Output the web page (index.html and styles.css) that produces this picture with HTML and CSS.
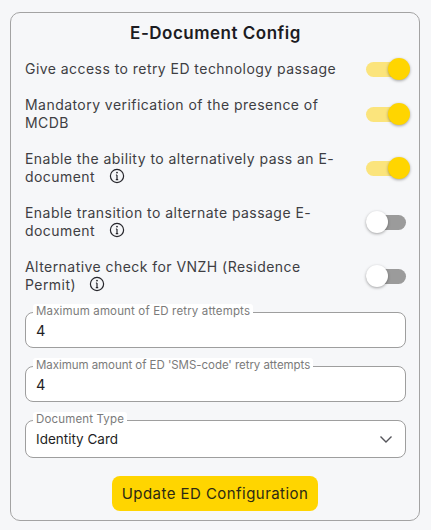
FILE: index.html
```html
<!DOCTYPE html>
<html lang="en">
<head>
<meta charset="utf-8">
<title>E-Document Config</title>
<link rel="stylesheet" href="styles.css">
</head>
<body>
<main class="card">
  <h1 class="title">E-Document Config</h1>
  <div class="rows">
    <div class="row">
      <span class="row-label">Give access to retry ED technology passage</span>
      <span class="switch on"><span class="thumb"></span></span>
    </div>
    <div class="row">
      <span class="row-label">Mandatory verification of the presence of MCDB</span>
      <span class="switch on"><span class="thumb"></span></span>
    </div>
    <div class="row">
      <span class="row-label">Enable the ability to alternatively pass an E-document
        <svg class="info" viewBox="0 0 16 16"><circle cx="8" cy="8" r="6.6"/><path d="M8 7v4.6M6.8 11.6h2.4M6.9 7H8"/><circle class="dot" cx="8" cy="4.6" r=".9"/></svg></span>
      <span class="switch on"><span class="thumb"></span></span>
    </div>
    <div class="row">
      <span class="row-label">Enable transition to alternate passage E-document
        <svg class="info" viewBox="0 0 16 16"><circle cx="8" cy="8" r="6.6"/><path d="M8 7v4.6M6.8 11.6h2.4M6.9 7H8"/><circle class="dot" cx="8" cy="4.6" r=".9"/></svg></span>
      <span class="switch"><span class="thumb"></span></span>
    </div>
    <div class="row">
      <span class="row-label">Alternative check for VNZH (Residence Permit)
        <svg class="info" viewBox="0 0 16 16"><circle cx="8" cy="8" r="6.6"/><path d="M8 7v4.6M6.8 11.6h2.4M6.9 7H8"/><circle class="dot" cx="8" cy="4.6" r=".9"/></svg></span>
      <span class="switch"><span class="thumb"></span></span>
    </div>
  </div>
  <div class="fields">
    <div class="field">
      <span class="field-label">Maximum amount of ED retry attempts</span>
      <span class="value">4</span>
    </div>
    <div class="field">
      <span class="field-label tight">Maximum amount of ED 'SMS-code' retry attempts</span>
      <span class="value">4</span>
    </div>
    <div class="field select">
      <span class="field-label">Document Type</span>
      <span class="value text">Identity Card</span>
      <svg class="chevron" viewBox="0 0 14 9"><path d="M1.5 1.5 7 7l5.5-5.5"/></svg>
    </div>
  </div>
  <button class="submit" type="button">Update ED Configuration</button>
</main>
</body>
</html>
```
FILE: styles.css
```css
* { box-sizing: border-box; }
html, body { margin: 0; height: 100%; }
body {
  background: #f6f7f9;
  color: #2c2c33;
  font-family: Inter, "Noto Sans", sans-serif;
  padding: 12px 11px 9px 10px;
}
.card {
  width: 410px;
  height: 509px;
  border: 1px solid #a3a3a3;
  border-radius: 10px;
  padding: 9px 13px 9px 14px;
  display: flex;
  flex-direction: column;
}
.title {
  margin: 0 0 16px;
  text-align: center;
  font-size: 17px;
  line-height: 22px;
  font-weight: 600;
  color: #1c1c22;
  letter-spacing: .5px;
}
.rows { display: flex; flex-direction: column; gap: 18px; }
.row {
  display: flex;
  align-items: center;
  justify-content: space-between;
  min-height: 18px;
}
.row-label {
  width: 320px;
  font-size: 14px;
  line-height: 18px;
  letter-spacing: .45px;
  color: #3e3e43;
}
.info {
  width: 16px;
  height: 16px;
  margin-left: 9px;
  vertical-align: -2px;
  fill: none;
  stroke: #26262c;
  stroke-width: 1.2;
}
.info .dot { fill: #26262c; stroke: none; }
.switch {
  position: relative;
  width: 40px;
  height: 15px;
  flex: none;
  border-radius: 8px;
  background: #9b9b9b;
}
.switch.on { background: #fbe47c; }
.thumb {
  position: absolute;
  top: -3.5px;
  left: 0;
  width: 22px;
  height: 22px;
  border-radius: 50%;
  background: #fff;
  box-shadow: 0 1px 3px rgba(0, 0, 0, .35);
}
.switch.on .thumb { left: 22px; background: #ffd500; }
.fields {
  display: flex;
  flex-direction: column;
  gap: 18px;
  margin-top: 18px;
}
.field {
  position: relative;
  height: 36px;
  display: flex;
  align-items: center;
  justify-content: space-between;
  padding: 0 12px 0 10px;
  background: #fff;
  border: 1px solid #9e9e9e;
  border-radius: 8px;
}
.field.select { height: 38px; }
.field-label {
  position: absolute;
  top: -9px;
  left: 7px;
  padding: 0 3px;
  background: #fff;
  border-radius: 3px;
  font-size: 11.5px;
  line-height: 14px;
  letter-spacing: .15px;
  color: #7b7b7b;
  white-space: nowrap;
}
.field-label.tight { letter-spacing: -.05px; }
.value { font-size: 14.5px; font-weight: 400; color: #1f1f25; }
.value.text { font-size: 13.5px; }
.chevron {
  width: 14px;
  height: 9px;
  fill: none;
  stroke: #55555a;
  stroke-width: 1.4;
}
.submit {
  align-self: center;
  margin: 18px 1px 0 0;
  width: 206px;
  height: 35px;
  border: 0;
  border-radius: 8px;
  background: #ffd500;
  color: #2c2a14;
  font: 400 15px Inter, "Noto Sans", sans-serif;
  letter-spacing: .45px;
}
```
